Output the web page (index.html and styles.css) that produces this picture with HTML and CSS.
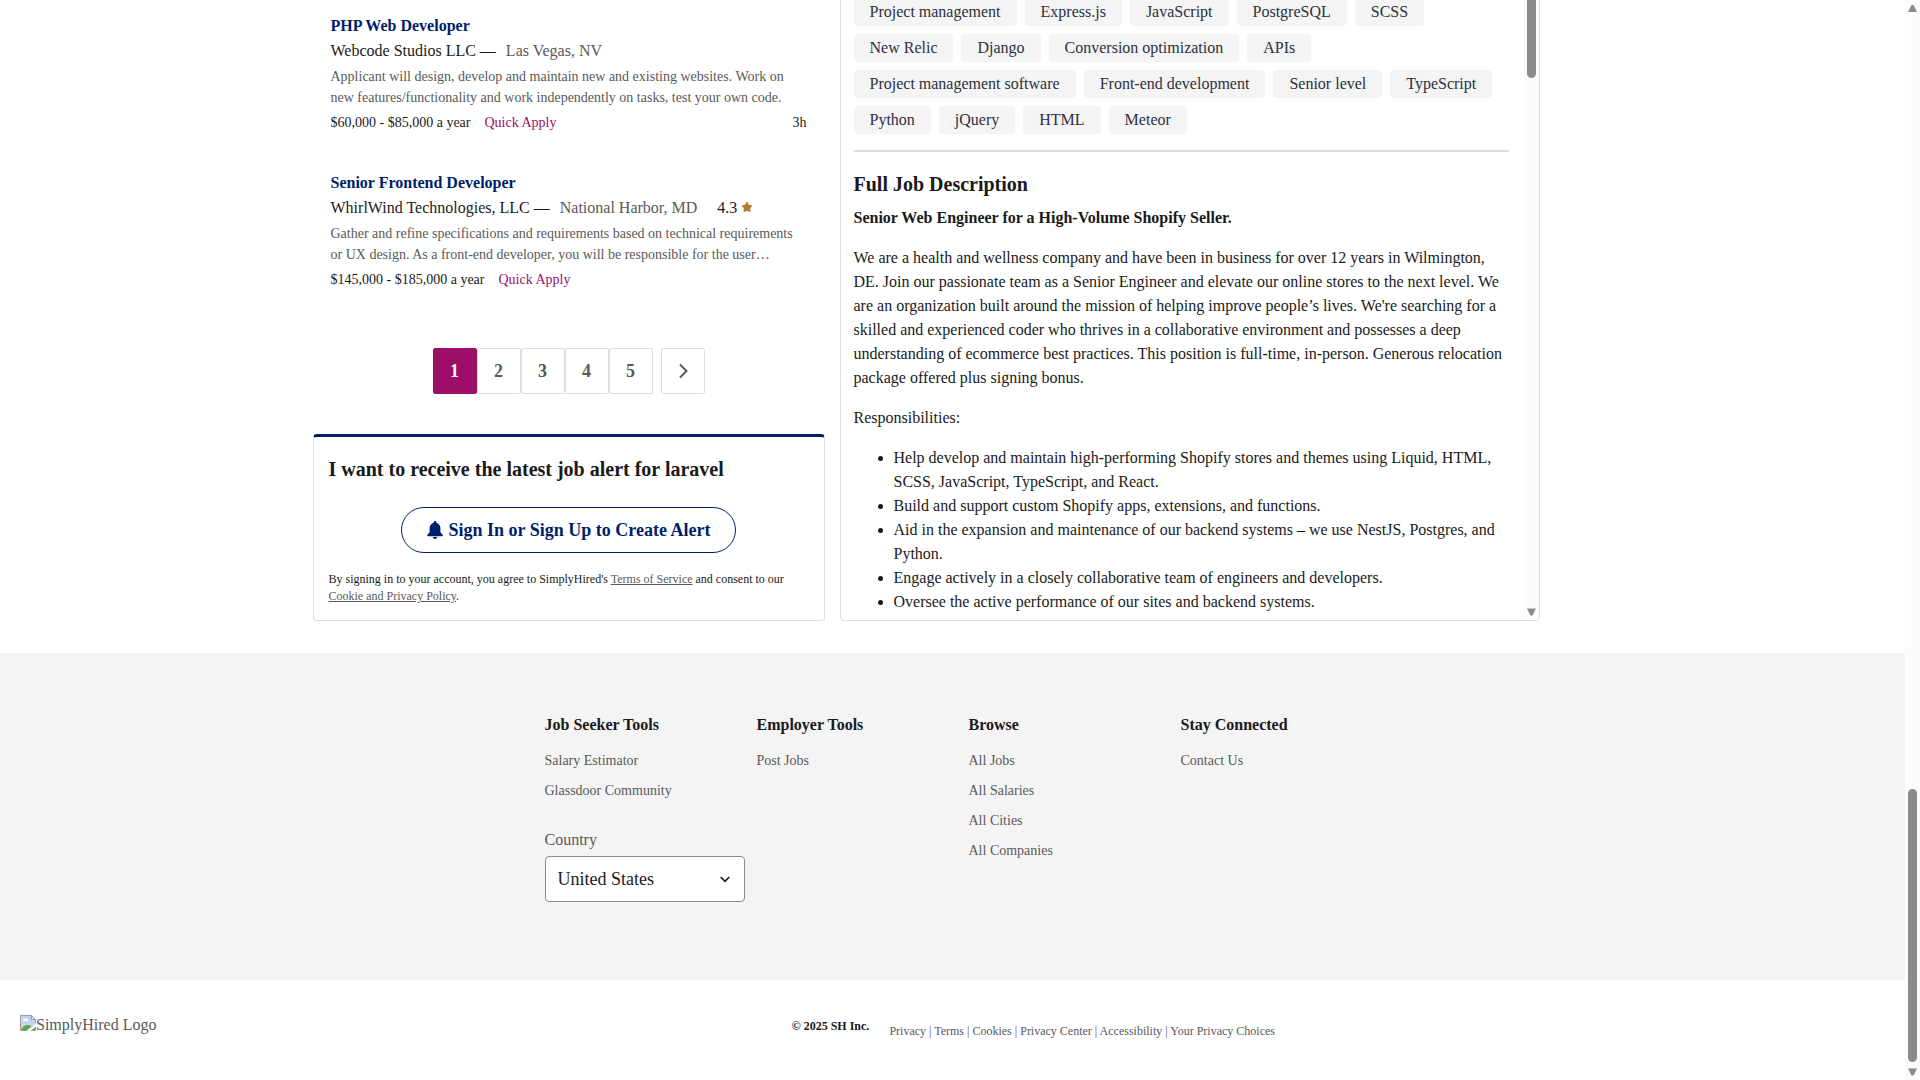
FILE: index.html
```html
<!DOCTYPE html>
<html lang="en">
<head>
<meta charset="utf-8">
<meta name="viewport" content="width=device-width, initial-scale=1">
<title>Laravel jobs | SimplyHired</title>
<link rel="stylesheet" href="styles.css">
</head>
<body>
<div class="page">
  <main class="results">
    <section class="listing">
      <ul class="jobs">
        <li class="job">
          <h2 class="job-title"><a href="#">PHP Web Developer</a></h2>
          <p class="job-company">Webcode Studios LLC — <span class="job-place">Las Vegas, NV</span></p>
          <p class="job-snippet">Applicant will design, develop and maintain new and existing websites. Work on new features/functionality and work independently on tasks, test your own code.</p>
          <p class="job-meta"><span>$60,000 - $85,000 a year</span><span class="quick">Quick Apply</span><span class="age">3h</span></p>
        </li>
        <li class="job">
          <h2 class="job-title"><a href="#">Senior Frontend Developer</a></h2>
          <p class="job-company">WhirlWind Technologies, LLC — <span class="job-place">National Harbor, MD</span><span class="rating">4.3 <svg class="star" viewBox="0 0 12 12" aria-hidden="true"><path d="M6 .5l1.900 3.200 3.700.7-2.500 2.900.5 3.900L6 9.800l-3.600 1.400.5-3.900L.4 4.400l3.700-.7z"/></svg></span></p>
          <p class="job-snippet">Gather and refine specifications and requirements based on technical requirements or UX design. As a front-end developer, you will be responsible for the user…</p>
          <p class="job-meta"><span>$145,000 - $185,000 a year</span><span class="quick">Quick Apply</span></p>
        </li>
      </ul>
      <nav class="pages" aria-label="Pagination">
        <a class="page-link current" href="#" aria-current="page">1</a>
        <a class="page-link" href="#">2</a>
        <a class="page-link" href="#">3</a>
        <a class="page-link" href="#">4</a>
        <a class="page-link" href="#">5</a>
        <a class="page-link next" href="#" aria-label="Next page"><svg class="next-icon" viewBox="0 0 10 16" aria-hidden="true"><path d="M2 1.500L8.500 8 2 14.500"/></svg></a>
      </nav>
      <section class="alert">
        <h2 class="alert-title">I want to receive the latest job alert for laravel</h2>
        <button class="alert-button" type="button"><svg class="bell" viewBox="0 0 16 18" aria-hidden="true"><path d="M8 0c.8 0 1.300.5 1.300 1.300v.4c2.500.6 4.100 2.700 4.100 5.300v4.200l2.200 2.600c.5.700.2 1.400-.6 1.400H1c-.8 0-1.100-.7-.6-1.400l2.200-2.600V7c0-2.600 1.600-4.700 4.100-5.300v-.4C6.700.5 7.200 0 8 0zM5.800 16h4.400c-.2 1.200-1.100 2-2.200 2s-2-.8-2.200-2z"/></svg>Sign In or Sign Up to Create Alert</button>
        <p class="alert-legal">By signing in to your account, you agree to SimplyHired's <a href="#">Terms of Service</a> and consent to our <a href="#">Cookie and Privacy Policy</a>.</p>
      </section>
    </section>

    <article class="detail">
      <div class="detail-body">
        <ul class="tags">
          <li class="tag">Project management</li><li class="tag">Express.js</li><li class="tag">JavaScript</li><li class="tag">PostgreSQL</li><li class="tag">SCSS</li><li class="tag">New Relic</li><li class="tag">Django</li><li class="tag">Conversion optimization</li><li class="tag">APIs</li><li class="tag">Project management software</li><li class="tag">Front-end development</li><li class="tag">Senior level</li><li class="tag">TypeScript</li><li class="tag">Python</li><li class="tag">jQuery</li><li class="tag">HTML</li><li class="tag">Meteor</li>
        </ul>
        <hr class="rule">
        <h2 class="detail-title">Full Job Description</h2>
        <div class="description">
          <p><b>Senior Web Engineer for a High-Volume Shopify Seller.</b></p>
          <p>We are a health and wellness company and have been in business for over 12 years in Wilmington, DE. Join our passionate team as a Senior Engineer and elevate our online stores to the next level. We are an organization built around the mission of helping improve people’s lives. We're searching for a skilled and experienced coder who thrives in a collaborative environment and possesses a deep understanding of ecommerce best practices. This position is full-time, in-person. Generous relocation package offered plus signing bonus.</p>
          <p>Responsibilities:</p>
          <ul class="duties">
            <li>Help develop and maintain high-performing Shopify stores and themes using Liquid, HTML, SCSS, JavaScript, TypeScript, and React.</li>
            <li>Build and support custom Shopify apps, extensions, and functions.</li>
            <li>Aid in the expansion and maintenance of our backend systems – we use NestJS, Postgres, and Python.</li>
            <li>Engage actively in a closely collaborative team of engineers and developers.</li>
            <li>Oversee the active performance of our sites and backend systems.</li>
          </ul>
        </div>
      </div>
      <div class="track" aria-hidden="true">
        <div class="thumb thumb-detail"></div>
        <svg class="arrow" viewBox="0 0 9 8"><path d="M0 .5h9L5.800 7q-1.300 1.500-2.600 0z"/></svg>
      </div>
    </article>
  </main>

  <footer class="footer">
    <div class="footer-columns">
      <section>
        <h3 class="footer-title">Job Seeker Tools</h3>
        <ul class="footer-links">
          <li><a href="#">Salary Estimator</a></li>
          <li><a href="#">Glassdoor Community</a></li>
        </ul>
        <div class="country">
          <label for="country">Country</label>
          <div class="select-box">
            <select id="country"><option>United States</option></select>
            <svg class="chevron" viewBox="0 0 10 7" aria-hidden="true"><path d="M.7 1L5 5.300 9.300 1"/></svg>
          </div>
        </div>
      </section>
      <section>
        <h3 class="footer-title">Employer Tools</h3>
        <ul class="footer-links"><li><a href="#">Post Jobs</a></li></ul>
      </section>
      <section>
        <h3 class="footer-title">Browse</h3>
        <ul class="footer-links">
          <li><a href="#">All Jobs</a></li>
          <li><a href="#">All Salaries</a></li>
          <li><a href="#">All Cities</a></li>
          <li><a href="#">All Companies</a></li>
        </ul>
      </section>
      <section>
        <h3 class="footer-title">Stay Connected</h3>
        <ul class="footer-links"><li><a href="#">Contact Us</a></li></ul>
      </section>
    </div>
  </footer>

  <div class="legal-bar">
    <a class="logo" href="#"><svg class="logo-icon" viewBox="0 0 16 16" aria-hidden="true"><path fill="#c3d4f5" d="M1 1h10l4 4v10H1z"/><path fill="#fff" d="M3 5.500c0-1 .8-1.500 1.500-1.300C5 3 7 3 7.200 4.500 8.200 4.500 8.500 6 7.500 6H3.500C3.200 6 3 5.800 3 5.500z"/><path fill="#5aac36" d="M1 15c1-3 4-5 7-5 1.500 0 2.500.5 3.500 1L7 15zM11 15l4-3v3z"/><path fill="#fff" d="M16 8.500L7.500 16h3L16 11.500z"/><path fill="none" stroke="#9a9a9a" d="M7 15.500H.5V.5h11l4 4v4M11.500.5v4h4M15.500 12v3.500H11"/></svg>SimplyHired Logo</a>
    <div class="legal">
      <span class="copyright">© 2025 SH Inc.</span>
      <nav class="legal-links" aria-label="Legal"><a href="#">Privacy</a> | <a href="#">Terms</a> | <a href="#">Cookies</a> | <a href="#">Privacy Center</a> | <a href="#">Accessibility</a> | <a href="#">Your Privacy Choices</a></nav>
    </div>
  </div>
</div>
<div class="track track-page" aria-hidden="true">
  <svg class="arrow" viewBox="0 0 9 8"><path d="M0 8h9L5.800 1.500q-1.300-1.500-2.600 0z"/></svg>
  <div class="thumb thumb-page"></div>
  <svg class="arrow" viewBox="0 0 9 8"><path d="M0 .5h9L5.800 7q-1.300 1.500-2.600 0z"/></svg>
</div>
</body>
</html>
```

FILE: styles.css
```css
* {
  box-sizing: border-box;
}

:root {
  --ink: #1a1a1a;
  --muted: #595959;
  --navy: #001e6c;
  --magenta: #9b0f69;
  --line: #dedede;
  --surface: #f4f4f4;
}

body {
  margin: 0;
  display: flex;
  min-height: 100vh;
  background: #fff;
  color: var(--ink);
  font: 16px/24px "Liberation Serif", "Times New Roman", serif;
}

h2, h3, p, ul {
  margin: 0;
  padding: 0;
}

ul {
  list-style: none;
}

a {
  color: inherit;
  text-decoration: none;
}

.page {
  flex: 1;
  min-width: 0;
  overflow: hidden;
}

/* Search results */
.results {
  display: grid;
  grid-template-columns: 512fr 700fr;
  gap: 15px;
  width: 100%;
  max-width: 1280px;
  margin: 0 auto;
  padding: 0 53px 32px 0;
}

.listing {
  padding-top: 13px;
}

.jobs {
  display: grid;
  gap: 38px;
  padding: 0 18px;
}

.job-title {
  font-size: 16px;
  line-height: 25px;
  color: var(--navy);
}

.job-company {
  line-height: 26px;
}

.job-place {
  margin-left: 6px;
  color: var(--muted);
}

.rating {
  margin-left: 20px;
}

.star {
  width: 12px;
  height: 12px;
  fill: #b9792b;
}

.job-snippet {
  margin-top: 2px;
  padding-right: 8px;
  font-size: 14px;
  line-height: 21px;
  color: var(--muted);
}

.job-meta {
  display: flex;
  gap: 14px;
  margin-top: 4px;
  font-size: 14px;
  line-height: 21px;
}

.job + .job {
  margin-top: -1px;
}

.quick {
  color: var(--magenta);
}

.age {
  margin-left: auto;
}

.pages {
  display: flex;
  justify-content: center;
  margin: 58px 0 40px;
}

.page-link {
  display: flex;
  align-items: center;
  justify-content: center;
  width: 44px;
  height: 46px;
  border: 1px solid var(--line);
  border-radius: 2px;
  color: var(--muted);
  font-size: 18px;
  font-weight: bold;
}

.current {
  border-color: var(--magenta);
  background: var(--magenta);
  color: #fff;
}

.next {
  margin-left: 8px;
}

.next-icon {
  width: 10px;
  height: 16px;
  fill: none;
  stroke: var(--muted);
  stroke-width: 2;
}

.alert {
  display: flex;
  flex-direction: column;
  padding: 18px 15px 15px;
  border: 1px solid var(--line);
  border-top: 3px solid var(--navy);
  border-radius: 4px;
}

.alert-title {
  font-size: 20px;
  line-height: 28px;
}

.alert-button {
  display: flex;
  align-items: center;
  align-self: center;
  gap: 6px;
  height: 46px;
  margin: 24px 0 18px;
  padding: 0 25px;
  border: 1px solid var(--navy);
  border-radius: 23px;
  background: #fff;
  color: var(--navy);
  font: bold 18px/24px "Liberation Serif", "Times New Roman", serif;
}

.bell {
  width: 16px;
  height: 18px;
  fill: currentColor;
}

.alert-legal {
  font-size: 12px;
  line-height: 17px;
}

.alert-legal a {
  color: var(--muted);
  text-decoration: underline;
}

/* Job detail */
.detail {
  display: flex;
  margin-top: -2px;
  border: 1px solid var(--line);
  border-top: 0;
  border-radius: 0 0 4px 4px;
}

.detail-body {
  flex: 1;
  min-width: 0;
  padding: 0 15px 0 13px;
}

.tags {
  display: flex;
  flex-wrap: wrap;
  gap: 8px;
}

.tag {
  padding: 2px 16px;
  border-radius: 4px;
  background: var(--surface);
  color: #2d3040;
}

.rule {
  margin: 16px 0 18px;
  border: 0;
  border-top: 2px solid var(--line);
}

.detail-title {
  margin-bottom: 8px;
  font-size: 20px;
  line-height: 28px;
}

.description {
  display: grid;
  gap: 16px;
}

.duties {
  padding-left: 40px;
  list-style: disc;
}

/* Scroll tracks */
.track {
  display: flex;
  flex-direction: column;
  align-items: center;
  justify-content: space-between;
  width: 15px;
  padding-bottom: 4px;
  background: #fcfcfc;
}

.track-page {
  position: sticky;
  top: 0;
  height: 100vh;
  padding: 4px 0;
}

.thumb {
  width: 9px;
  border-radius: 5px;
  background: #8b8b8b;
}

.thumb-detail {
  height: 80px;
  border-radius: 0 0 5px 5px;
}

.thumb-page {
  height: 273px;
  margin: auto 0 6px;
}

.arrow {
  width: 9px;
  height: 8px;
  fill: #8b8b8b;
}

/* Footer */
.footer {
  padding: 60px 24px 78px;
  background: var(--surface);
}

.footer-columns {
  display: grid;
  grid-template-columns: repeat(4, minmax(0, 1fr));
  gap: 32px;
  max-width: 816px;
  margin: 0 auto;
}

.footer-title {
  margin-bottom: 9px;
  font-size: 16px;
  line-height: 24px;
}

.footer-links {
  font-size: 14px;
  line-height: 30px;
  color: var(--muted);
}

.country {
  width: 200px;
  margin-top: 22px;
  color: var(--muted);
}

.country label {
  display: block;
  margin-bottom: 4px;
}

.select-box {
  position: relative;
}

.select-box select {
  display: block;
  width: 100%;
  height: 46px;
  padding: 0 32px 0 12px;
  appearance: none;
  border: 1px solid #8c8c8c;
  border-radius: 4px;
  background: #fff;
  color: var(--ink);
  font: 18px/24px "Liberation Serif", "Times New Roman", serif;
}

.chevron {
  position: absolute;
  top: 20px;
  right: 15px;
  width: 10px;
  height: 7px;
  fill: none;
  stroke: var(--ink);
  stroke-width: 1.6;
  pointer-events: none;
}

.legal-bar {
  display: grid;
  grid-template-columns: 12fr 17fr;
  align-items: start;
  padding: 35px 20px;
}

.logo {
  display: flex;
  align-items: start;
  line-height: 20px;
  color: var(--muted);
}

.logo-icon {
  width: 16px;
  height: 16px;
}

.legal {
  display: flex;
  gap: 20px;
  font-size: 12px;
}

.copyright {
  font-weight: bold;
  line-height: 22px;
}

.legal-links {
  line-height: 32px;
  color: var(--muted);
}
```
